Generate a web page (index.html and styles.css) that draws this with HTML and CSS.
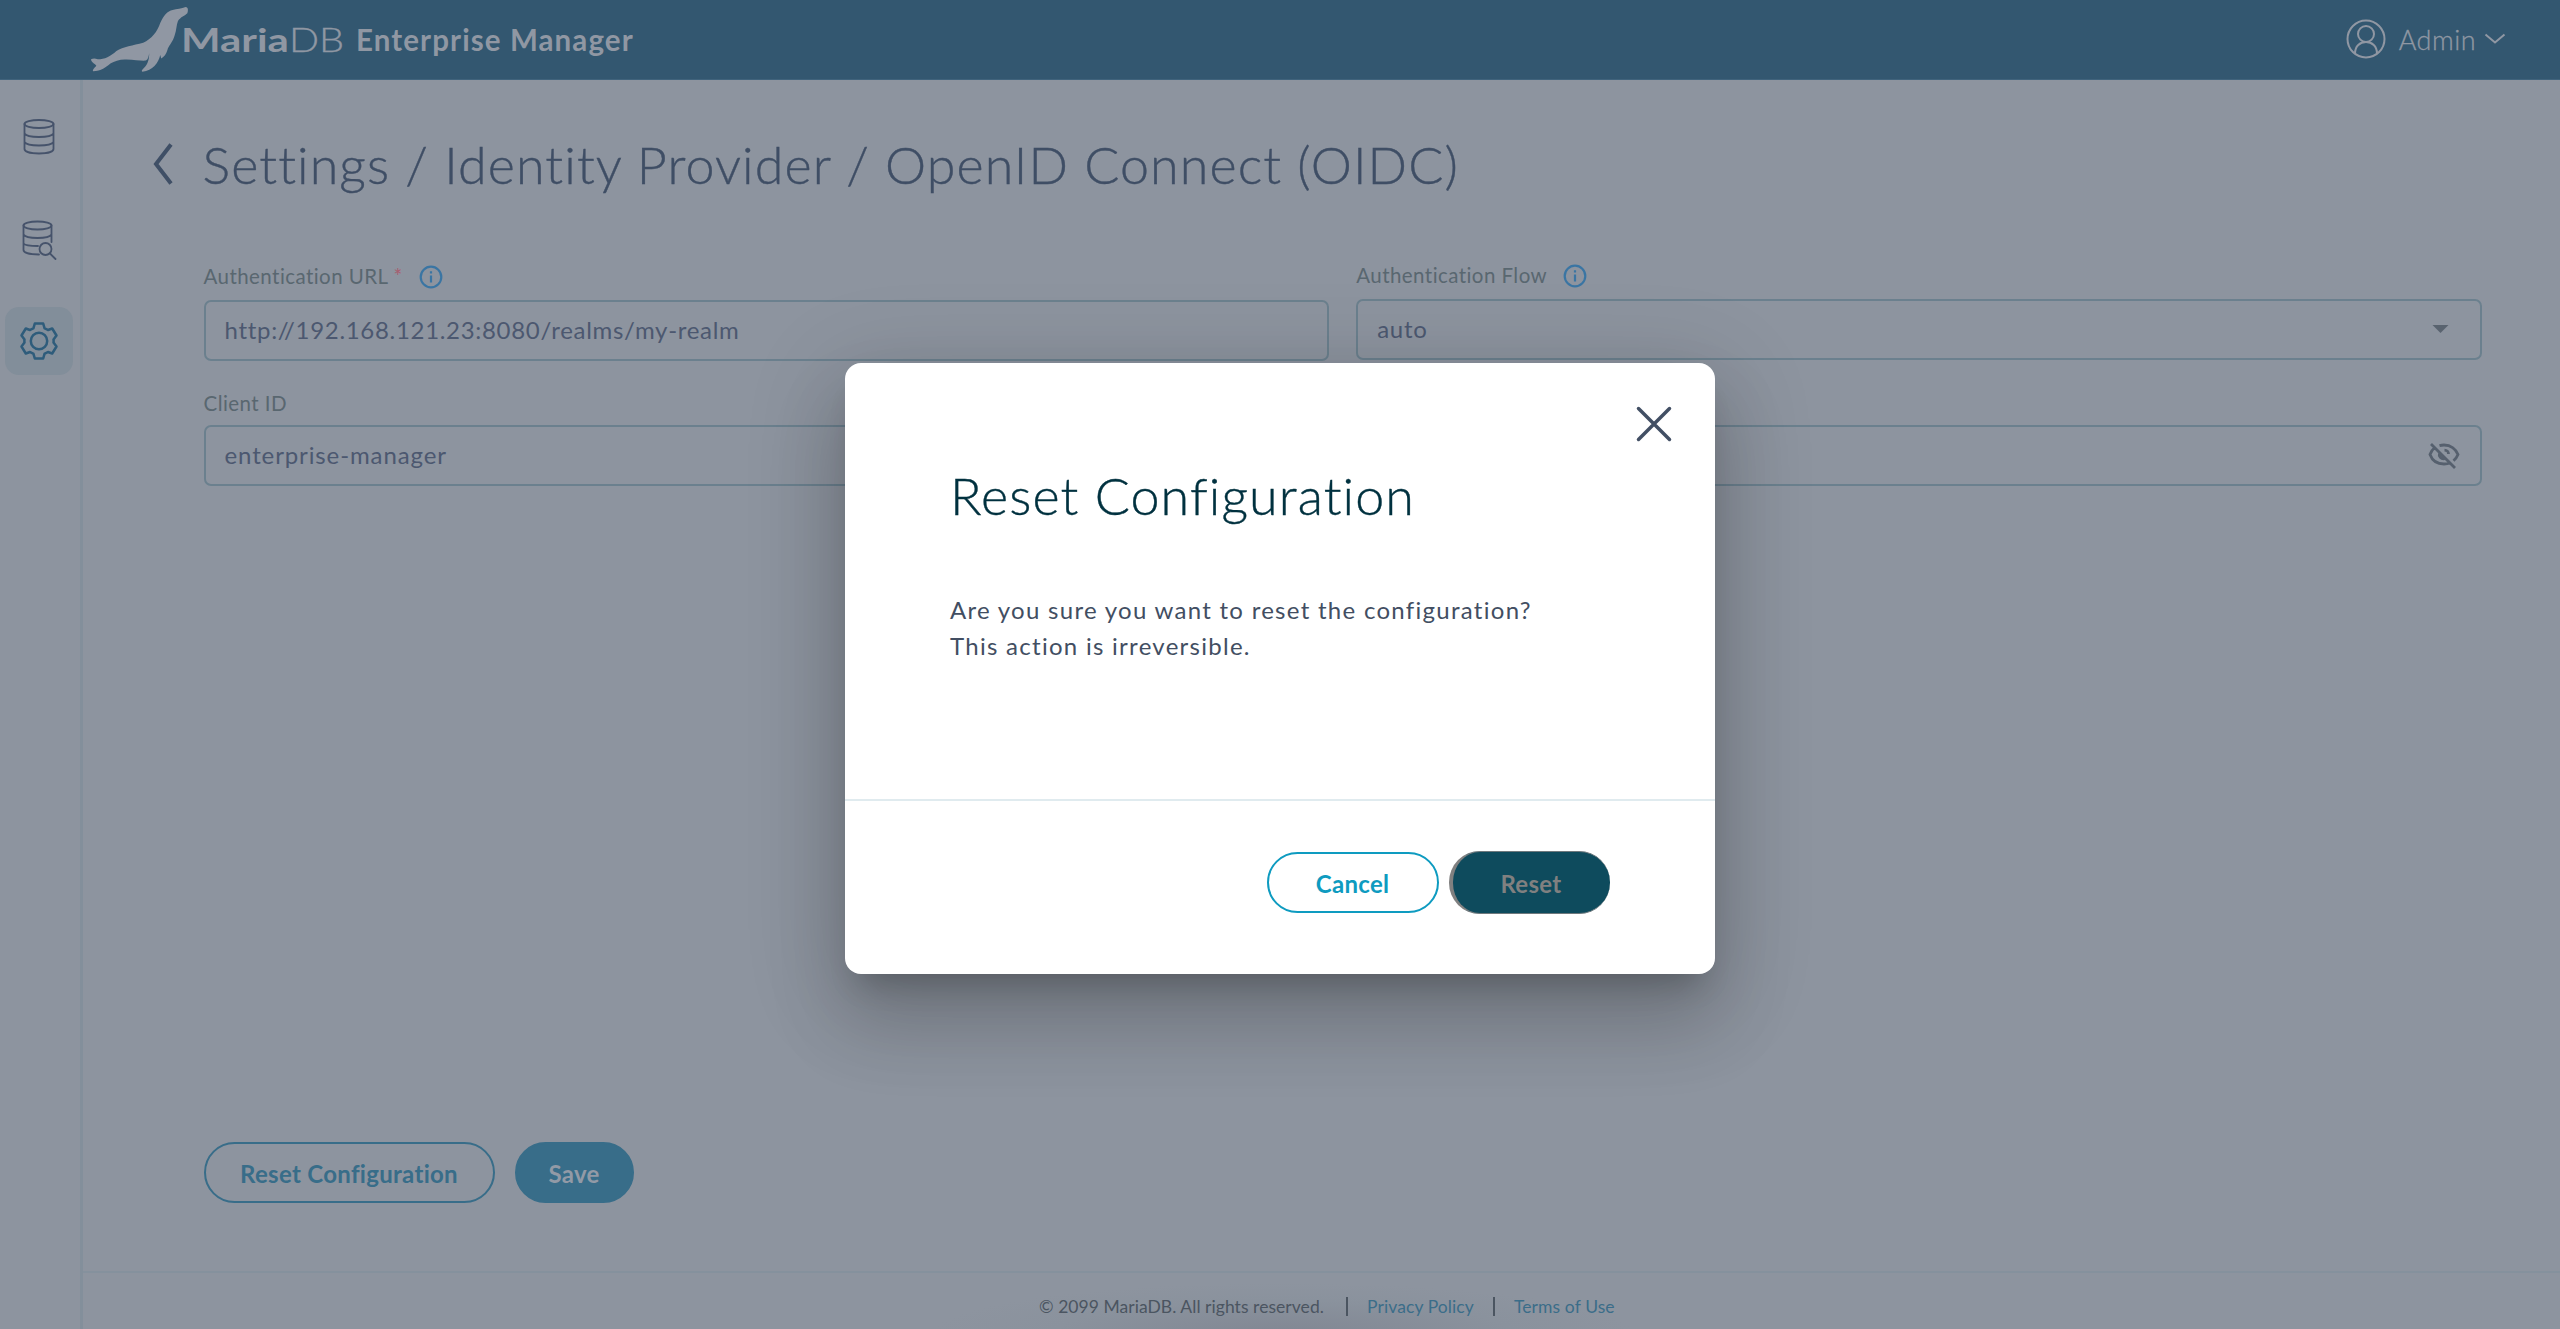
FILE: index.html
```html
<!DOCTYPE html>
<html lang="en">
<head>
<meta charset="utf-8">
<title>MariaDB Enterprise Manager</title>
<link rel="stylesheet" href="styles.css">
</head>
<body>
<div class="app">
  <header class="topbar">
    <div class="brand">
      <svg class="seal" viewBox="34 20 290 194" preserveAspectRatio="none"><path d="M34 176C40 173 47 173 54 176C75 176 92 167 110 151C130 139 160 135 190 127C215 115 232 95 241 68C252 44 262 33 278 29C290 25 305 25 317 20C325 21 325 30 322 39C315 46 302 50 294 62C289 74 290 90 284 105C278 124 270 132 264 143C260 157 256 166 244 174L241 163C236 186 218 210 188 213C184 211 186 208 190 204C200 196 208 182 208 158C206 168 205 176 198 180C185 181 165 178 140 177C120 176 105 182 92 189C78 200 65 212 40 212C38 206 46 200 50 195C44 188 35 186 34 176Z"/></svg>
      <span class="maria">Maria</span><span class="db">DB</span>
      <span class="product">Enterprise Manager</span>
    </div>
    <div class="account">
      <svg class="avatar" viewBox="0 0 40 40"><circle cx="20" cy="20" r="18.5"/><circle cx="20" cy="15" r="8"/><path d="M9 34.500C9 27 14 23 20 23S31 27 31 34.500"/></svg>
      <span class="user">Admin</span>
      <svg class="caret" viewBox="0 0 22 12"><path d="M1.500 1.500L11 9.500L20.500 1.500"/></svg>
    </div>
  </header>
  <div class="body">
    <nav class="sidebar">
      <a class="nav"><svg viewBox="0 0 34 38"><g><ellipse cx="17" cy="6" rx="14.500" ry="4"/><path d="M2.500 6V31C2.500 33.500 8 35.500 17 35.500S31.500 33.500 31.500 31V6M2.500 15.500C4 18 10 19 17 19S30 18 31.500 15.500M2.500 24C4 26.500 10 27.500 17 27.500S30 26.500 31.500 24"/></g></svg></a>
      <a class="nav"><svg viewBox="0 0 34 38"><g><ellipse cx="15.500" cy="5.500" rx="14" ry="4"/><path d="M1.500 5.500V30C1.500 32.500 7 34.500 17 34.500M29.500 5.500V22M1.500 14.500C3 17 9 18 15.500 18S28 17 29.500 14.500M1.500 23.500C3 25.500 9 26 16 26"/><circle cx="23.500" cy="29" r="6"/><path d="M28 33.500L33.500 39"/></g></svg></a>
      <a class="nav active"><svg viewBox="0 0 38 38"><path d="M14.800 1.500H23.200L24.600 6.400Q26.400 7 28 8L32.200 6.500L36.500 13.500L33.500 17.500Q33.800 19 33.500 20.500L36.500 24.500L32.200 31.500L28 30Q26.400 31 24.600 31.600L23.200 36.500H14.800L13.400 31.600Q11.600 31 10 30L5.800 31.500L1.500 24.500L4.500 20.500Q4.200 19 4.500 17.500L1.500 13.500L5.800 6.500L10 8Q11.600 7 13.400 6.400Z"/><circle cx="19" cy="19" r="8.200"/></svg></a>
    </nav>
    <div class="content">
      <main class="page">
        <div class="heading">
          <svg class="back" viewBox="0 0 20 42"><path d="M18 1.500L3 21L18 40.500"/></svg>
          <h1>Settings / Identity Provider / OpenID Connect (OIDC)</h1>
        </div>
        <form class="form">
          <div class="field">
            <label class="label">Authentication URL <span class="req">*</span><svg class="info" viewBox="0 0 24 24"><circle cx="12" cy="12" r="10.300"/><path d="M12 10.500V17.500M12 6.200V8.600"/></svg></label>
            <div class="input">http://192.168.121.23:8080/realms/my-realm</div>
          </div>
          <div class="field raised">
            <label class="label">Authentication Flow<svg class="info" viewBox="0 0 24 24"><circle cx="12" cy="12" r="10.300"/><path d="M12 10.500V17.500M12 6.200V8.600"/></svg></label>
            <div class="input">auto<svg class="arrow" viewBox="0 0 16 8"><path d="M0 0H16L8 8Z"/></svg></div>
          </div>
          <div class="field second">
            <label class="label">Client ID</label>
            <div class="input name">enterprise-manager</div>
          </div>
          <div class="field second">
            <label class="label">Client Secret</label>
            <div class="input"><svg class="eye" viewBox="0 0 32 28"><path d="M11.500 3.700C13 3.200 14.500 3 16 3C23 3 28 7.500 30 12.500C29 15 27.500 17 25.500 18.700M6.500 5.800C4.500 7.500 3 9.500 2 12.500C4 18 9 22 16 22C18.500 22 20.500 21.500 22.500 20.700M11.500 11C10.500 14.500 13 17.200 16.500 16.700M16.500 8.200C19 8.200 20.500 10 20.500 12M3 2L27 26"/></svg></div>
          </div>
        </form>
        <div class="actions">
          <button class="btn outline">Reset Configuration</button>
          <button class="btn solid">Save</button>
        </div>
      </main>
      <footer class="footer">
        <span class="copy">© 2099 MariaDB. All rights reserved.</span><i class="bar"></i><a>Privacy Policy</a><i class="bar"></i><a>Terms of Use</a>
      </footer>
    </div>
  </div>
</div>
<section class="dialog">
  <div class="dialog-main">
    <svg class="close" viewBox="0 0 36 36"><path d="M2.500 2.500L33.500 33.500M33.500 2.500L2.500 33.500"/></svg>
    <h2>Reset Configuration</h2>
    <p>Are you sure you want to reset the configuration?<br>This action is irreversible.</p>
  </div>
  <div class="dialog-actions">
    <button class="btn cancel">Cancel</button>
    <button class="btn reset">Reset</button>
  </div>
</section>
</body>
</html>
```
FILE: styles.css
```css
* { box-sizing: border-box; }
body { margin: 0; height: 1329px; overflow: hidden; background: #8d949f; font-family: Lato, "Open Sans", sans-serif; position: relative; }
svg { display: block; fill: none; flex: none; overflow: visible; }
h1, h2, p { margin: 0; font-weight: 300; white-space: nowrap; }
.app { display: flex; flex-direction: column; height: 100%; }

.topbar { height: 80px; flex: none; background: #335770; border-bottom: 1px solid #40637c; display: flex; justify-content: space-between; color: #9097a3; padding: 0 54px 0 91px; }
.brand, .account { display: flex; align-items: center; white-space: nowrap; height: 78px; }
.seal { width: 97px; height: 65px; fill: #9097a3; }
.maria { font-weight: 700; font-size: 33px; line-height: 81px; transform: scaleX(1.27); transform-origin: left; width: 105px; margin-left: -7px; }
.db { font-weight: 300; font-size: 33px; line-height: 81px; transform: scaleX(1.2); transform-origin: left; width: 69px; margin-left: 3px; -webkit-text-stroke: .3px; }
.product { font-weight: 700; font-size: 29.500px; letter-spacing: 1.100px; line-height: 78px; margin-left: -2px; padding-top: 1px; }
.avatar { width: 40px; height: 40px; stroke: #9097a3; stroke-width: 2; }
.user { font-size: 27px; font-weight: 300; letter-spacing: .5px; margin: 0 8px 0 13px; -webkit-text-stroke: .3px; }
.caret { width: 22px; height: 12px; stroke: #9097a3; stroke-width: 2; }

.body { flex: 1; display: flex; min-height: 0; }
.sidebar { width: 83px; flex: none; border-right: 3px solid #838f9b; padding: 23px 0 0 5px; display: flex; flex-direction: column; gap: 34px; }
.nav { width: 68px; height: 68px; border-radius: 14px; display: grid; place-items: center; }
.nav svg { width: 34px; height: 38px; stroke: #46536b; stroke-width: 1.800; stroke-linecap: round; }
.nav.active { background: #828e9a; }
.nav.active svg { width: 38px; height: 38px; stroke: #2e5c7b; stroke-width: 2.500; stroke-linejoin: round; }

.content { flex: 1; display: flex; flex-direction: column; min-width: 0; }
.page { flex: 1; display: flex; flex-direction: column; padding: 43px 78px 68px 120.500px; }
.heading { display: flex; align-items: center; height: 81px; gap: 30px; margin-left: -51px; }
.back { width: 20px; height: 42px; stroke: #3f4f66; stroke-width: 4; }
h1 { font-size: 52px; letter-spacing: 1.080px; color: #3f4e65; -webkit-text-stroke: .4px; padding-top: 1px; }
.form { margin-top: 48px; display: grid; grid-template-columns: 1fr 1fr; column-gap: 27px; row-gap: 20px; }
.raised { position: relative; top: -1px; }
.label { display: flex; align-items: center; height: 48px; font-size: 20.500px; letter-spacing: .440px; color: #596770; white-space: pre; }
.second .label { height: 44px; }
.req { color: #a85d6f; }
.info { width: 24px; height: 24px; margin: 2px 0 0 16px; stroke: #3a75a3; stroke-width: 2.200; }
.input { height: 61px; border: 2px solid #6b808e; border-radius: 7px; display: flex; align-items: center; padding: 0 49px 2px 19px; font-size: 24px; letter-spacing: .690px; color: #4c5870; }
.name { letter-spacing: .880px; }
.arrow { width: 17px; height: 8px; margin-left: auto; margin-right: -18px; fill: #59636f; }
.eye { width: 32px; height: 28px; margin: 3px -29px 0 auto; stroke: #56606e; stroke-width: 2.800; }
.actions { display: flex; gap: 20px; margin-top: auto; }
.btn { font: 700 24px Lato, sans-serif; letter-spacing: .3px; height: 61px; border-radius: 31px; padding: 1px 0 0; border: 2px solid; background: none; }
.outline { width: 291px; border-color: #386d89; color: #386d89; }
.solid { width: 119px; border-color: #386d89; background: #386d89; color: #929aa6; }

.footer { height: 58px; flex: none; border-top: 2px solid #85919d; display: flex; align-items: center; padding: 10px 0 0 956px; font-size: 17.500px; color: #4b5561; white-space: nowrap; background: radial-gradient(ellipse 350px 50px at 1200px 60px, #818793, #8a929d 65%, transparent); }
.copy { width: 284px; letter-spacing: .05px; }
.footer a { color: #3b6d89; letter-spacing: .1px; }
.bar { width: 2px; height: 19px; background: #4b5561; margin: 0 19px 0 19px; }
.copy + .bar { margin: 0 19px 0 23px; }

.dialog { position: absolute; left: 845px; top: 363px; width: 869.500px; height: 611px; border-radius: 16px; background: #fff; box-shadow: 0 22px 30px -14px rgba(0,0,0,.2), 0 48px 76px 6px rgba(0,0,0,.14), 0 18px 92px 16px rgba(0,0,0,.12); display: flex; flex-direction: column; }
.dialog-main { height: 438px; border-bottom: 2px solid #e0ebef; padding: 43px 43px 0 105px; }
.close { width: 36px; height: 36px; margin-left: auto; stroke: #424f64; stroke-width: 3.500; stroke-linecap: round; }
h2 { font-size: 52px; line-height: 80px; letter-spacing: 1.100px; color: #00313f; margin-top: 13px; -webkit-text-stroke: .4px; }
p { font-size: 24px; font-weight: 400; line-height: 35.700px; letter-spacing: 1.280px; color: #424e62; margin-top: 57px; }
.dialog-actions { display: flex; align-items: center; justify-content: flex-end; gap: 10px; padding: 50px 105px 0 0; }
.cancel { width: 172px; border-color: #0e9bc0; color: #0e9bc0; }
.reset { width: 161px; height: 63px; border-style: solid; border-width: 1px 0 1px 4px; border-color: #6f797d #0e4b5d #6f797d #808080; background: #0e4b5d; color: #808080; }
```
